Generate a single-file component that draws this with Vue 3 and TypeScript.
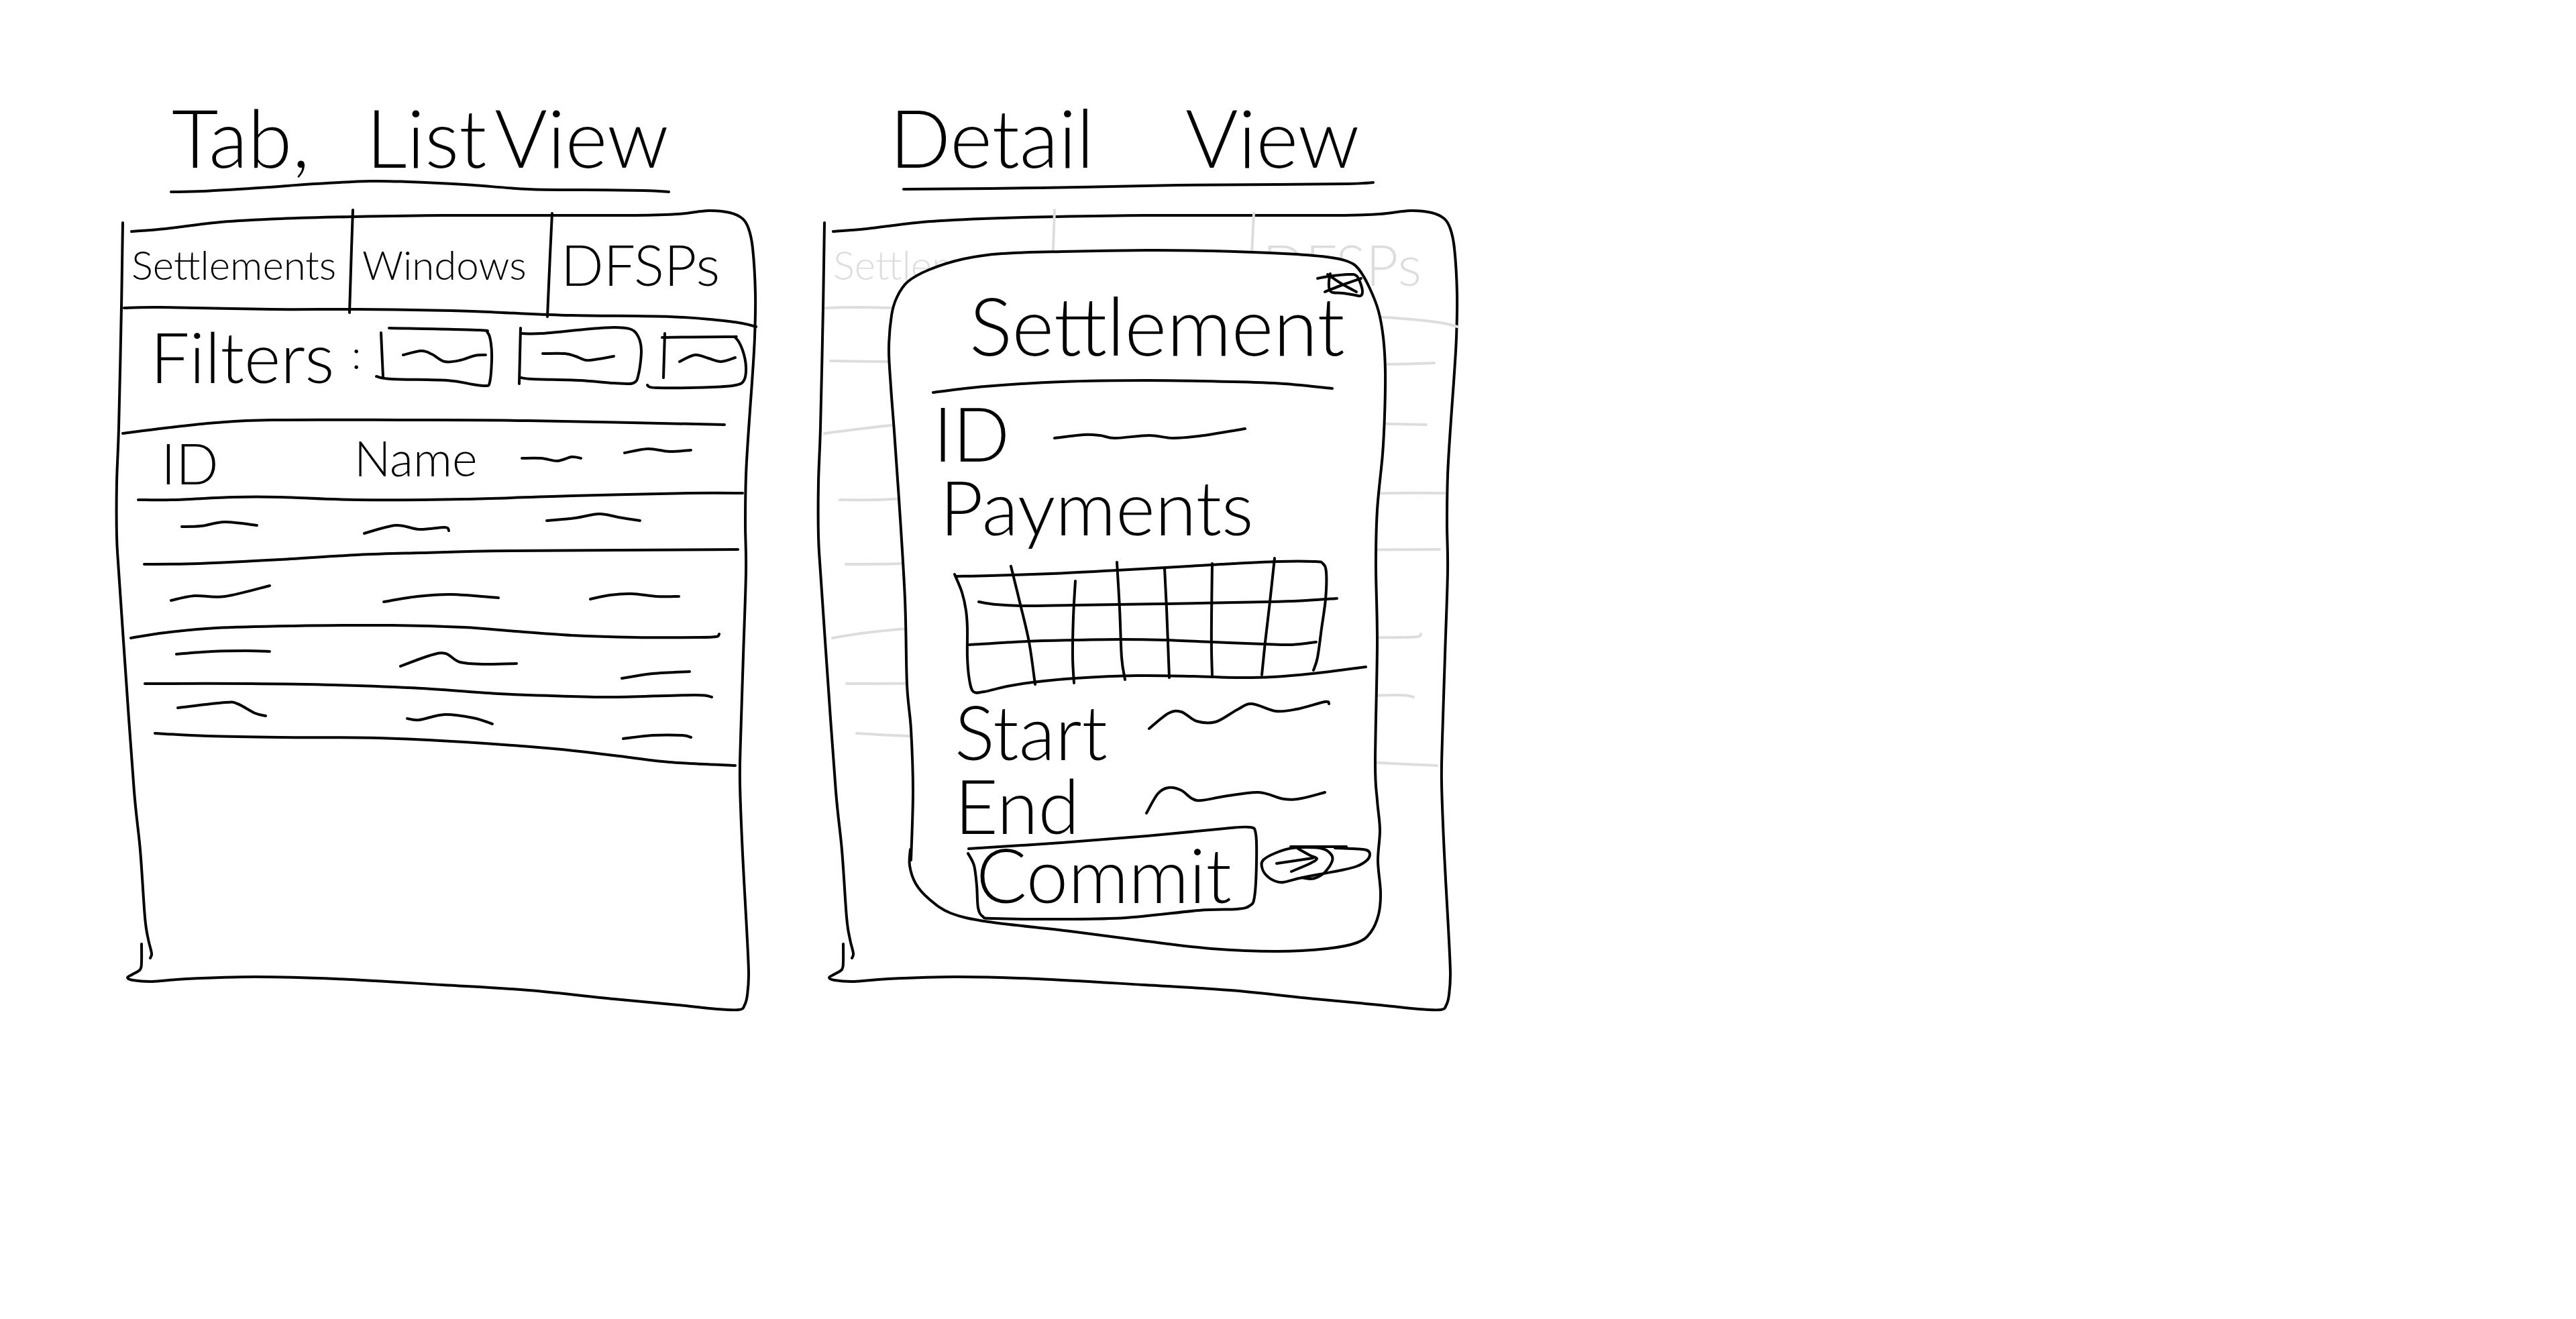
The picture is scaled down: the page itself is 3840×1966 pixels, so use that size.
<script setup lang="ts">
import { h, ref } from 'vue'

/** Turns a list of "x,y" points into a smooth pen stroke. */
function smooth(points: string): string {
  const p = points.split(' ').map((pair) => pair.split(',').map(Number))
  let d = `M${p[0][0]} ${p[0][1]}`
  for (let i = 0; i < p.length - 1; i++) {
    const a = p[i - 1] ?? p[i]
    const b = p[i]
    const c = p[i + 1]
    const e = p[i + 2] ?? c
    const x1 = b[0] + (c[0] - a[0]) / 6
    const y1 = b[1] + (c[1] - a[1]) / 6
    const x2 = c[0] - (e[0] - b[0]) / 6
    const y2 = c[1] - (e[1] - b[1]) / 6
    d += `C${x1.toFixed(1)} ${y1.toFixed(1)} ${x2.toFixed(1)} ${y2.toFixed(1)} ${c[0]} ${c[1]}`
  }
  return d
}

interface SketchProps {
  box: string
  lines: string[]
  fill?: string
}

/** Pen strokes that stretch with the part they belong to. */
const Sketch = (props: SketchProps) =>
  h(
    'svg',
    {
      viewBox: props.box,
      preserveAspectRatio: 'none',
      'aria-hidden': 'true',
      fill: props.fill ?? 'none',
      stroke: 'currentColor',
      'stroke-width': 4,
      'stroke-linecap': 'round',
      'stroke-linejoin': 'round',
    },
    props.lines.map((line) => h('path', { d: smooth(line), 'vector-effect': 'non-scaling-stroke' })),
  )
Sketch.props = ['box', 'lines', 'fill']

const frame = [
  '183,332 181,458 177,638 174,720 174,799 177,852 188,1013 200,1180 209,1267 216,1367 221,1400 226,1421 224,1428',
  '196,345 246,341 329,331 418,326 526,323 660,321 820,321 947,321 1011,319 1056,314 1088,317 1107,326 1116,341 1122,370 1126,437 1125,503 1121,570 1116,640 1112,709 1111,781 1112,852 1108,977 1104,1102 1103,1167 1107,1273 1113,1383 1116,1450 1114,1483 1110,1498 1102,1505 1068,1504 1011,1498 915,1489 788,1476 660,1468 501,1459 380,1456 278,1459 227,1463 198,1461 190,1457 198,1452 209,1445 211,1433 211,1407',
]

const tabs = ['Settlements', 'Windows', 'DFSPs']
const activeTab = ref('Settlements')

const tabLines = [
  '526,313 524,370 521,466',
  '823,318 820,380 816,472',
  '185,459 239,458 405,461 533,461 673,463 749,466 852,470 998,472 1068,477 1107,482 1127,487',
]

const filters = [
  {
    name: 'status',
    box: '561 487 173 88',
    lines: [
      '568,496 571,562',
      '580,489 711,492 727,496 732,513 733,537 730,570 724,575 705,573 667,567 584,565 561,561',
      '601,529 628,523 644,528 663,539 686,537 708,530 724,529',
    ],
  },
  {
    name: 'window',
    box: '774 487 183 88',
    lines: [
      '776,489 774,572',
      '777,497 807,497 871,491 915,488 941,491 952,503 956,523 952,557 944,571 915,571 864,567 794,565 777,563',
      '809,527 842,527 858,531 874,537 893,535 915,531',
    ],
  },
  {
    name: 'currency',
    box: '965 487 149 88',
    lines: [
      '991,497 989,563',
      '987,503 1087,502 1097,504 1107,522 1112,547 1109,567 1097,574 1062,577 979,578 965,574',
      '1013,539 1036,529 1056,534 1075,539 1096,533',
    ],
  },
]

const tableTop = '183,646 246,638 322,630 405,626 596,626 788,627 1080,633'
const headRule = '206,745 258,745 348,741 418,741 533,745 692,744 852,739 1030,735 1107,735'
const headMarks = [
  { box: '775 620 140 140', line: '778,683 807,683 831,687 852,681 866,683' },
  { box: '915 620 225 140', line: '931,675 966,669 998,673 1030,671' },
]

const rows = [
  {
    top: 760,
    height: 90,
    rule: '215,841 297,840 418,834 533,827 628,824 762,821 1100,819',
    cells: [
      '271,785 300,784 335,778 383,783',
      '543,795 590,783 625,789 663,786 669,791',
      '815,776 858,772 893,766 922,771 954,776',
    ],
  },
  {
    top: 850,
    height: 110,
    rule: '195,951 246,943 322,936 437,933 584,932 692,935 769,941 852,947 947,950 1043,950 1068,949 1072,945',
    cells: [
      '255,895 290,888 335,889 402,873',
      '572,897 622,889 673,886 743,891',
      '880,893 909,887 941,885 979,889 1012,889',
    ],
  },
  {
    top: 960,
    height: 80,
    rule: '216,1019 373,1019 501,1021 628,1026 743,1034 820,1037 915,1039 1036,1036 1061,1039',
    cells: [
      '263,975 316,971 367,970 402,971',
      '597,993 641,977 664,974 686,987 724,990 770,989',
      '927,1011 973,1004 1028,1001',
    ],
  },
  {
    top: 1040,
    height: 130,
    rule: '231,1093 309,1097 418,1099 565,1100 692,1106 826,1116 915,1126 998,1136 1096,1141',
    cells: [
      '265,1055 335,1047 354,1049 380,1063 396,1067',
      '607,1071 625,1073 663,1065 705,1070 734,1079',
      '929,1101 973,1096 1017,1096 1030,1099',
    ],
  },
]

const columns = [
  { x: 160, width: 340, span: 1 },
  { x: 500, width: 275, span: 1 },
  { x: 775, width: 365, span: 2 },
]

const fadedRules = [
  '192,538 275,539 500,543 820,545 1021,543 1092,541',
  tableTop,
  headRule,
  ...rows.map((row) => row.rule),
]

const modalOutline = [
  '312,1282 315,1180 312,1087 306,1020 303,893 294,743 287,643 282,577 279,520 283,470 291,443 307,420 339,402 390,386 447,378 537,375 664,373 760,374 868,378 932,383 964,390 980,402 996,430 1009,464 1016,503 1019,553 1018,620 1015,677 1007,760 1005,843 1007,960 1004,1137 1007,1193 1011,1237 1008,1283 1012,1330 1009,1363 997,1390 977,1405 932,1414 856,1418 760,1414 664,1403 549,1388 428,1374 371,1361 339,1340 319,1317 310,1290 311,1266',
]

const closeIcon = [
  '918,415 934,412 964,409 976,411 982,422 985,435 982,441 974,440 956,437 941,436 936,432 935,420 937,408',
  '933,409 954,423 976,435',
  '929,435 957,424 983,415',
]

const gridLines = [
  '377,856 388,883 394,910 396,937 396,980 399,1013 405,1031 421,1031 455,1023 493,1017 556,1011 649,1007 733,1008 796,1010 851,1009 910,1004 990,994',
  '379,859 430,858 522,855 619,850 691,846 775,841 859,837 914,837 926,840 931,853 930,893 924,937 918,980 912,999',
  '413,897 438,901 476,903 556,902 691,900 846,897 901,895 947,892',
  '399,961 484,956 556,954 623,953 691,954 762,957 838,960 880,961 916,957',
  '461,844 474,897 488,957 497,1020',
  '557,866 554,920 553,980 555,1018',
  '619,838 623,907 626,980 631,1013',
  '690,847 693,907 697,1010',
  '761,840 760,920 760,970 761,1006',
  '854,832 847,897 840,957 835,1006',
]

const commitBox = [
  '397,1272 406,1290 410,1320 412,1353 419,1366 435,1369 537,1370 632,1368 741,1357 798,1355 817,1350 824,1337 827,1287 826,1243 817,1233 779,1235 664,1246 537,1256 398,1265',
]

const toggle = [
  '878,1262 961,1262',
  '944,1264 971,1265 991,1267 996,1273 992,1282 977,1291 954,1297 927,1302 891,1309 867,1315 854,1313 841,1304 835,1292 837,1282 854,1272 881,1264 921,1264 937,1272 940,1283 929,1300 917,1308 907,1310 894,1308',
  '857,1287 911,1279',
  '889,1265 907,1275 917,1280 907,1287 879,1299',
]

const underlineList = ['255,286 303,285 386,280 469,274 552,270 609,271 692,275 788,282 871,283 960,284 997,286']
const underlineDetail = ['301,282 505,280 709,276 856,275 964,274 1001,272']
const titleRule = ['345,585 422,576 537,569 664,567 792,569 868,572 940,579']
const idMark = ['526,653 569,648 594,649 616,653 667,649 702,653 741,650 810,639']
const startMark = ['667,1086 696,1063 715,1061 738,1075 766,1076 798,1058 820,1049 856,1060 887,1057 929,1046 935,1049']
const endMark = ['663,1212 680,1183 696,1174 715,1178 738,1193 779,1187 830,1181 868,1191 894,1190 929,1181']
</script>

<template>
  <main class="board">
    <section class="view">
      <h2 class="title title-list"><span class="kind">Tab,</span> <span>List</span> <span>View</span></h2>
      <Sketch class="underline" box="160 264 980 36" :lines="underlineList" />

      <div class="sheet">
        <Sketch class="backdrop" box="160 300 980 1210" :lines="frame" />

        <div class="tabs" role="tablist">
          <Sketch class="backdrop" box="160 300 980 187" :lines="tabLines" />
          <button
            v-for="tab in tabs"
            :key="tab"
            class="tab"
            type="button"
            role="tab"
            :aria-selected="tab === activeTab"
            @click="activeTab = tab"
          >
            {{ tab }}
          </button>
        </div>

        <form class="filters">
          <span class="filters-label">Filters</span>
          <span class="colon">:</span>
          <span v-for="filter in filters" :key="filter.name" class="filter" :class="filter.name">
            <Sketch class="backdrop" :box="filter.box" :lines="filter.lines" />
            <select class="filter-select" :name="filter.name" :aria-label="filter.name"></select>
          </span>
        </form>

        <table class="list">
          <colgroup>
            <col class="col-id" />
            <col class="col-name" />
            <col class="col-third" />
            <col />
          </colgroup>
          <thead>
            <tr>
              <th scope="col" class="head-id">
                <Sketch class="backdrop" box="160 620 980 140" :lines="[tableTop, headRule]" />
                ID
              </th>
              <th scope="col" class="head-name">Name</th>
              <th v-for="mark in headMarks" :key="mark.box" scope="col">
                <Sketch class="head-mark" :box="mark.box" :lines="[mark.line]" />
              </th>
            </tr>
          </thead>
          <tbody>
            <tr v-for="row in rows" :key="row.top">
              <td v-for="(column, i) in columns" :key="column.x" :colspan="column.span">
                <Sketch
                  v-if="i === 0"
                  class="backdrop"
                  :box="`160 ${row.top} 980 ${row.height}`"
                  :lines="[row.rule]"
                />
                <Sketch
                  :style="{ height: `${row.height}px` }"
                  :box="`${column.x} ${row.top} ${column.width} ${row.height}`"
                  :lines="[row.cells[i]]"
                />
              </td>
            </tr>
          </tbody>
        </table>
      </div>
    </section>

    <section class="view">
      <h2 class="title title-detail"><span>Detail</span> <span>View</span></h2>
      <Sketch class="underline" box="160 264 980 36" :lines="underlineDetail" />

      <div class="sheet">
        <Sketch class="backdrop" box="160 300 980 1210" :lines="frame" />

        <div class="faded">
          <div class="tabs">
            <Sketch class="backdrop" box="160 300 980 187" :lines="tabLines" />
            <button v-for="tab in tabs" :key="tab" class="tab" type="button" tabindex="-1">{{ tab }}</button>
          </div>
          <Sketch class="faded-rules" box="160 487 980 683" :lines="fadedRules" />
        </div>

        <div class="modal" role="dialog" aria-labelledby="modal-title">
          <Sketch class="backdrop" box="279 373 741 1045" :lines="modalOutline" fill="#fff" />

          <button class="close" type="button" aria-label="Close">
            <Sketch class="backdrop" box="918 405 68 40" :lines="closeIcon" />
          </button>
          <h3 id="modal-title" class="modal-title">Settlement</h3>
          <Sketch class="title-rule" box="279 544 741 46" :lines="titleRule" />

          <dl class="fields">
            <div class="field">
              <dt>ID</dt>
              <dd><Sketch class="mark" box="519 590 501 110" :lines="idMark" /></dd>
            </div>
          </dl>

          <h4 id="payments" class="payments-label">Payments</h4>
          <div class="payments">
            <Sketch class="backdrop" box="279 830 741 205" :lines="gridLines" />
            <table class="payments-grid" aria-labelledby="payments">
              <tbody>
                <tr v-for="r in 3" :key="r">
                  <td v-for="c in 7" :key="c"></td>
                </tr>
              </tbody>
            </table>
          </div>

          <dl class="fields">
            <div class="field dated">
              <dt>Start</dt>
              <dd><Sketch class="mark" box="655 1035 365 110" :lines="startMark" /></dd>
            </div>
            <div class="field dated">
              <dt>End</dt>
              <dd><Sketch class="mark" box="655 1145 365 110" :lines="endMark" /></dd>
            </div>
          </dl>

          <div class="actions">
            <button class="commit" type="button">
              <Sketch class="backdrop" box="397 1255 430 115" :lines="commitBox" />
              Commit
            </button>
            <label class="toggle">
              <Sketch class="backdrop" box="835 1255 161 60" :lines="toggle" />
              <input class="toggle-input" type="checkbox" checked aria-label="Confirm commit" />
            </label>
          </div>
        </div>
      </div>
    </section>
  </main>
</template>

<style>
body {
  background: #fff;
}
</style>

<style scoped>
.board {
  display: grid;
  grid-template-columns: repeat(2, minmax(0, 980px));
  column-gap: 66px;
  padding: 0 160px;
  color: #000;
  font-family: Lato, 'Open Sans', sans-serif;
  font-weight: 300;
}

svg {
  display: block;
  width: 100%;
  overflow: visible;
}

h2,
h3,
h4,
dl,
dd {
  margin: 0;
  font-weight: inherit;
}

button,
select {
  padding: 0;
  border: 0;
  background: none;
  color: inherit;
  font: inherit;
}

.backdrop {
  position: absolute;
  inset: 0;
  height: 100%;
  pointer-events: none;
}

.title {
  display: flex;
  padding-top: 144px;
  font-size: 120px;
  line-height: 120px;
  white-space: nowrap;
}

.title-list {
  gap: 12px;
  padding-left: 96px;
}

.title-list .kind {
  padding-right: 72px;
}

.title-detail {
  gap: 136px;
  padding-left: 120px;
}

.underline {
  height: 36px;
}

.sheet {
  position: relative;
  padding-bottom: 340px;
}

.tabs {
  position: relative;
  display: grid;
  grid-template-columns: 364px 296px 1fr;
  height: 187px;
}

.tab {
  padding: 0 0 0 16px;
  font-size: 60px;
  text-align: left;
}

.tab:first-of-type {
  padding-left: 36px;
}

.tab:last-of-type {
  font-size: 84px;
}

.filters {
  display: flex;
  align-items: flex-start;
  height: 133px;
  padding-left: 64px;
}

.filters-label {
  width: 300px;
  font-size: 104px;
  line-height: 88px;
}

.colon {
  width: 37px;
  padding-top: 8px;
  font-size: 60px;
  line-height: 64px;
}

.filter {
  position: relative;
  height: 88px;
}

.filter.status {
  width: 173px;
}

.filter.window {
  width: 183px;
  margin-left: 40px;
}

.filter.currency {
  width: 149px;
  margin-left: 8px;
}

.filter-select {
  width: 100%;
  height: 100%;
  appearance: none;
}

.list {
  position: relative;
  width: 100%;
  border-collapse: collapse;
  table-layout: fixed;
}

.col-id {
  width: 340px;
}

.col-name {
  width: 275px;
}

.col-third {
  width: 140px;
}

.list tr {
  position: relative;
}

.list th,
.list td {
  padding: 0;
}

.list th {
  box-sizing: border-box;
  height: 140px;
  font-weight: inherit;
  line-height: 84px;
  text-align: left;
}

.list .head-id {
  padding-left: 80px;
  font-size: 84px;
}

.list .head-name {
  padding: 0 0 16px 28px;
  font-size: 72px;
}

.head-mark {
  height: 140px;
}

.faded {
  position: relative;
  color: #ddd;
}

.faded-rules {
  height: 683px;
}

.modal {
  position: absolute;
  top: 73px;
  right: 120px;
  left: 119px;
  padding-bottom: 48px;
}

.modal > * {
  position: relative;
}

.modal > .backdrop {
  position: absolute;
}

.modal > .close {
  position: absolute;
  top: 32px;
  right: 34px;
  z-index: 1;
  width: 68px;
  height: 40px;
}

.modal-title {
  padding: 51px 0 0 120px;
  font-size: 120px;
  line-height: 120px;
}

.title-rule {
  height: 46px;
}

.field {
  display: grid;
  grid-template-columns: 240px 1fr;
  font-size: 112px;
  line-height: 110px;
}

.field dt {
  padding-left: 66px;
}

.field.dated {
  grid-template-columns: 376px 1fr;
}

.field.dated dt {
  padding-left: 98px;
}

.field .mark {
  height: 110px;
}

.payments-label {
  height: 130px;
  padding-left: 76px;
  font-size: 112px;
  line-height: 110px;
}

.payments {
  padding: 10px 90px 20px 110px;
}

.payments-grid {
  width: 100%;
  height: 175px;
}

.actions {
  display: flex;
  gap: 8px;
  padding-left: 118px;
}

.commit {
  position: relative;
  width: 430px;
  height: 115px;
  padding: 0 0 20px 12px;
  font-size: 112px;
  line-height: 88px;
  text-align: left;
}

.toggle {
  position: relative;
  width: 161px;
  height: 60px;
}

.toggle-input {
  width: 100%;
  height: 100%;
  margin: 0;
  appearance: none;
}
</style>
